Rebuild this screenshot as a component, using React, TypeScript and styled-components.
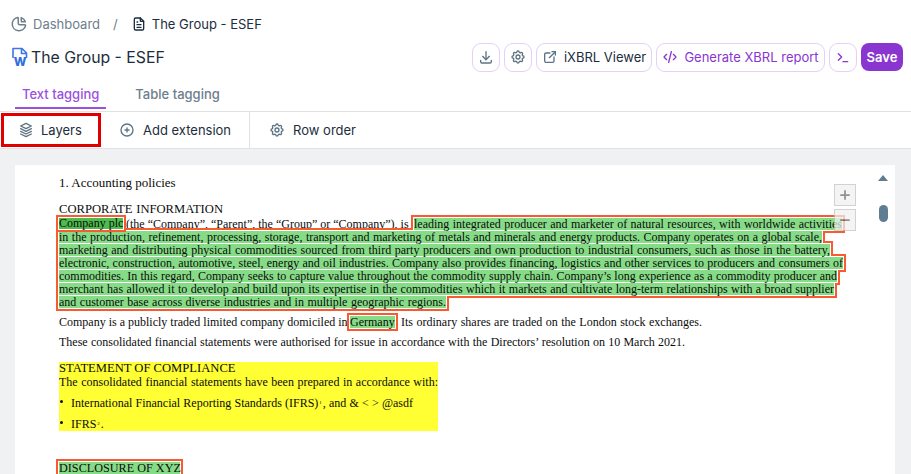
import React from 'react';
import styled, { createGlobalStyle } from 'styled-components';
import {
    TbChartPie,
    TbCirclePlus,
    TbCode,
    TbDownload,
    TbExternalLink,
    TbFileText,
    TbMinus,
    TbPlus,
    TbSettings,
    TbStack3,
    TbTerminal,
} from 'react-icons/tb';

const PURPLE = '#8a35d0';
const INK = '#1c2d3d';
const GREEN = '#86dc86';
const ORANGE = '#fa5a32';

const GlobalStyle = createGlobalStyle`
    html, body {
        margin: 0;
        background: #fff;
    }
    * {
        box-sizing: border-box;
    }
`;

const Page = styled.div`
    display: flex;
    flex-direction: column;
    width: 911px;
    height: 474px;
    overflow: hidden;
    font-family: Inter, "Liberation Sans", sans-serif;
    color: ${INK};
`;

const Breadcrumbs = styled.nav`
    display: flex;
    align-items: center;
    height: 20px;
    margin-top: 14px;
    padding-left: 10px;
    font-size: 13px;
`;

const Crumb = styled.span<{ $muted?: boolean }>`
    display: flex;
    align-items: center;
    gap: 5px;
    color: ${p => (p.$muted ? '#6d7e8c' : INK)};
`;

const Slash = styled.span`
    margin: 0 13px;
    color: #6d7e8c;
`;

const TitleRow = styled.header`
    display: flex;
    align-items: center;
    justify-content: space-between;
    height: 28px;
    margin-top: 9px;
    padding: 0 8px 0 11px;
`;

const Title = styled.h1`
    display: flex;
    align-items: center;
    gap: 2px;
    margin: 0;
    font-size: 15.8px;
    font-weight: 400;
`;

const Actions = styled.div`
    display: flex;
    gap: 4px;
`;

const ActionButton = styled.button<{ $accent?: boolean; $wide?: number }>`
    display: flex;
    align-items: center;
    justify-content: center;
    gap: 6px;
    width: ${p => p.$wide ?? 28}px;
    height: 29px;
    padding: 0;
    border: 1px solid #e4d0f8;
    border-radius: 9px;
    background: #fff;
    font: inherit;
    font-size: 13px;
    color: ${p => (p.$accent ? PURPLE : INK)};
    svg {
        color: ${p => (p.$accent ? PURPLE : '#5e7383')};
    }
`;

const SaveButton = styled.button`
    width: 42px;
    height: 28px;
    padding: 0;
    border: 0;
    border-radius: 8px;
    background: ${PURPLE};
    color: #fff;
    font: inherit;
    font-size: 13px;
    font-weight: 600;
`;

const Tabs = styled.div`
    display: flex;
    gap: 22px;
    height: 32px;
    margin-top: 9px;
    padding-left: 15px;
    border-bottom: 1px solid #dfe3e6;
`;

const Tab = styled.div<{ $active?: boolean }>`
    display: flex;
    align-items: center;
    justify-content: center;
    height: 29px;
    padding: 0 7px;
    font-size: 13px;
    font-weight: 500;
    color: ${p => (p.$active ? '#9b50e0' : '#6d7e8c')};
    border-bottom: 2px solid ${p => (p.$active ? '#9b50e0' : 'transparent')};
`;

const Toolbar = styled.div`
    display: flex;
    align-items: stretch;
    height: 37px;
    border-bottom: 1px solid #dfe3e6;
`;

const ToolItem = styled.div<{ $left: number; $right: number; $divider?: boolean }>`
    display: flex;
    align-items: center;
    gap: 8px;
    padding: 0 ${p => p.$right}px 0 ${p => p.$left}px;
    font-size: 13px;
    border-right: ${p => (p.$divider ? '1px solid #dfe3e6' : '0')};
    svg {
        color: #5e7383;
    }
`;

const MarkedItem = styled(ToolItem)`
    width: 100px;
    height: 34px;
    margin: 1px 0 0 1px;
    border: 3px solid #e00000;
    gap: 7px;
    padding: 0 0 0 14px;
`;

const Main = styled.main`
    display: flex;
    flex: 1;
    min-height: 0;
    padding: 16px 16px 0 15px;
    background: #eff1f3;
`;

const Panel = styled.section`
    position: relative;
    display: flex;
    flex: 1;
    min-width: 0;
    background: #fff;
`;

const Doc = styled.article`
    flex: 1;
    min-width: 0;
    padding: 12px 0 0 44px;
    font-family: "Liberation Serif", serif;
    color: #0c0c0c;
`;

const Row = styled.div<{ $h?: number; $top?: number }>`
    display: flex;
    align-items: flex-start;
    height: ${p => p.$h ?? 13}px;
    margin-top: ${p => p.$top ?? 0}px;
    line-height: ${p => (p.$h ?? 13) - 1}px;
`;

// a piece of text stretched to the width it has in the reference
const Text = styled.span<{ $w: number; $gap?: number; $size?: number }>`
    display: block;
    flex: none;
    width: ${p => p.$w}px;
    margin-left: ${p => p.$gap ?? 0}px;
    white-space: nowrap;
    text-align: justify;
    text-align-last: justify;
    font-size: ${p => p.$size ?? 12}px;
`;

const TagBlock = styled.div`
    isolation: isolate;
`;

// orange and white layers sit under all the green, so neighbouring rows merge in one outline
const TagSeg = styled.span<{ $w: number; $gap?: number }>`
    position: relative;
    display: block;
    flex: none;
    width: ${p => p.$w}px;
    height: 12px;
    margin-left: ${p => p.$gap ?? 0}px;
    &::before {
        content: '';
        position: absolute;
        inset: -3px;
        z-index: 1;
        background: ${ORANGE};
    }
    &::after {
        content: '';
        position: absolute;
        inset: -1px;
        z-index: 2;
        background: #fff;
    }
`;

const TagText = styled(Text)`
    position: relative;
    z-index: 3;
    height: 12px;
    background: ${GREEN};
`;

const DarkTag = styled(Text)`
    position: relative;
    z-index: 4;
    height: 11px;
    line-height: 11px;
    background: #4dbb4d;
    box-shadow: 0 0 0 1px #fff, 0 0 0 3px ${ORANGE};
`;

const Highlight = styled.div`
    width: 379px;
    margin-top: 13px;
    background: #ffff33;
`;

const BulletRow = styled(Row)`
    position: relative;
    padding-left: 12px;
    &::before {
        content: '';
        position: absolute;
        left: 1px;
        top: 3px;
        width: 3px;
        height: 3px;
        border-radius: 50%;
        background: #111;
    }
`;

const Note = styled.sup`
    font-size: 5px;
    line-height: 0;
    vertical-align: 3px;
    margin: 0 1px;
`;

const ZoomButtons = styled.div`
    position: absolute;
    top: 19px;
    left: 819px;
    z-index: 9;
    display: flex;
    flex-direction: column;
    gap: 3px;
`;

const ZoomButton = styled.div`
    display: flex;
    align-items: center;
    justify-content: center;
    width: 22px;
    height: 22px;
    border: 1.5px solid #c2c2c2;
    background: #f1f1f1;
    color: #666;
    opacity: 0.72;
`;

const ScrollColumn = styled.div`
    display: flex;
    flex-direction: column;
    align-items: center;
    flex: none;
    width: 24px;
    padding-top: 10px;
`;

const ScrollArrow = styled.div`
    width: 0;
    height: 0;
    border-left: 5px solid transparent;
    border-right: 5px solid transparent;
    border-bottom: 6px solid #5f7d92;
`;

const ScrollThumb = styled.div`
    width: 9px;
    height: 17px;
    margin-top: 24px;
    border-radius: 5px;
    background: #5f7d92;
`;

const WordIcon = () => (
    <svg width="18" height="24" viewBox="0 0 18 24" fill="none">
        <path
            d="M2 13V3.5h9l4.5 4.5v5M10.5 3.5V8.5h5"
            stroke="#3b78e7"
            strokeWidth="1.6"
            strokeLinejoin="round"
        />
        <text
            x="9"
            y="21"
            textAnchor="middle"
            fontFamily="Inter, sans-serif"
            fontSize="12"
            fontWeight="800"
            fill="#2f6fdf"
        >
            W
        </text>
    </svg>
);

const App = () => (
    <Page>
        <GlobalStyle />
        <Breadcrumbs>
            <Crumb $muted>
                <TbChartPie size={18} />
                Dashboard
            </Crumb>
            <Slash>/</Slash>
            <Crumb>
                <TbFileText size={16} />
                The Group - ESEF
            </Crumb>
        </Breadcrumbs>
        <TitleRow>
            <Title>
                <WordIcon />
                The Group - ESEF
            </Title>
            <Actions>
                <ActionButton>
                    <TbDownload size={16} />
                </ActionButton>
                <ActionButton>
                    <TbSettings size={16} />
                </ActionButton>
                <ActionButton $wide={116}>
                    <TbExternalLink size={16} />
                    iXBRL Viewer
                </ActionButton>
                <ActionButton $accent $wide={169}>
                    <TbCode size={16} />
                    Generate XBRL report
                </ActionButton>
                <ActionButton $accent>
                    <TbTerminal size={16} />
                </ActionButton>
                <SaveButton>Save</SaveButton>
            </Actions>
        </TitleRow>
        <Tabs>
            <Tab $active>Text tagging</Tab>
            <Tab>Table tagging</Tab>
        </Tabs>
        <Toolbar>
            <MarkedItem $left={14} $right={0}>
                <TbStack3 size={16} />
                Layers
            </MarkedItem>
            <ToolItem $left={18} $right={18} $divider>
                <TbCirclePlus size={16} />
                Add extension
            </ToolItem>
            <ToolItem $left={19} $right={0}>
                <TbSettings size={16} />
                Row order
            </ToolItem>
        </Toolbar>
        <Main>
            <Panel>
                <Doc>
                    <Row>
                        <Text $w={115} $size={13}>1. Accounting policies</Text>
                    </Row>
                    <Row $h={14} $top={13}>
                        <Text $w={164} $size={12.6}>CORPORATE INFORMATION</Text>
                    </Row>
                    <TagBlock>
                        <Row $top={1}>
                            <DarkTag $w={64}>Company plc</DarkTag>
                            <Text $w={285} $gap={3}>(the “Company”, “Parent”, the “Group” or “Company”), is a</Text>
                            <TagSeg $w={428} $gap={3}>
                                <TagText $w={428}>leading integrated producer and marketer of natural resources, with worldwide activities</TagText>
                            </TagSeg>
                        </Row>
                        <Row>
                            <TagSeg $w={763}>
                                <TagText $w={763}>in the production, refinement, processing, storage, transport and marketing of metals and minerals and energy products. Company operates on a global scale,</TagText>
                            </TagSeg>
                        </Row>
                        <Row>
                            <TagSeg $w={771}>
                                <TagText $w={771}>marketing and distributing physical commodities sourced from third party producers and own production to industrial consumers, such as those in the battery,</TagText>
                            </TagSeg>
                        </Row>
                        <Row>
                            <TagSeg $w={784}>
                                <TagText $w={784}>electronic, construction, automotive, steel, energy and oil industries. Company also provides financing, logistics and other services to producers and consumers of</TagText>
                            </TagSeg>
                        </Row>
                        <Row>
                            <TagSeg $w={778}>
                                <TagText $w={778}>commodities. In this regard, Company seeks to capture value throughout the commodity supply chain. Company’s long experience as a commodity producer and</TagText>
                            </TagSeg>
                        </Row>
                        <Row>
                            <TagSeg $w={775}>
                                <TagText $w={775}>merchant has allowed it to develop and build upon its expertise in the commodities which it markets and cultivate long-term relationships with a broad supplier</TagText>
                            </TagSeg>
                        </Row>
                        <Row>
                            <TagSeg $w={387}>
                                <TagText $w={387}>and customer base across diverse industries and in multiple geographic regions.</TagText>
                            </TagSeg>
                        </Row>
                        <Row $top={7}>
                            <Text $w={288}>Company is a publicly traded limited company domiciled in</Text>
                            <TagSeg $w={45} $gap={3}>
                                <TagText $w={45}>Germany</TagText>
                            </TagSeg>
                            <Text $w={301} $gap={6}>Its ordinary shares are traded on the London stock exchanges.</Text>
                        </Row>
                    </TagBlock>
                    <Row $top={7}>
                        <Text $w={626}>These consolidated financial statements were authorised for issue in accordance with the Directors’ resolution on 10 March 2021.</Text>
                    </Row>
                    <Highlight>
                        <Row $h={14}>
                            <Text $w={174} $size={12.6}>STATEMENT OF COMPLIANCE</Text>
                        </Row>
                        <Row>
                            <Text $w={379}>The consolidated financial statements have been prepared in accordance with:</Text>
                        </Row>
                        <BulletRow $top={8}>
                            <Text $w={342}>
                                International Financial Reporting Standards (IFRS)<Note>1</Note>, and &amp; &lt; &gt; @asdf
                            </Text>
                        </BulletRow>
                        <BulletRow $top={8}>
                            <Text $w={32}>IFRS<Note>2</Note>.</Text>
                        </BulletRow>
                    </Highlight>
                    <TagBlock>
                        <Row $h={14} $top={31}>
                            <TagSeg $w={121}>
                                <TagText $w={121} $size={12.2}>DISCLOSURE OF XYZ</TagText>
                            </TagSeg>
                        </Row>
                    </TagBlock>
                </Doc>
                <ZoomButtons>
                    <ZoomButton>
                        <TbPlus size={14} strokeWidth={3} />
                    </ZoomButton>
                    <ZoomButton>
                        <TbMinus size={14} strokeWidth={3} />
                    </ZoomButton>
                </ZoomButtons>
                <ScrollColumn>
                    <ScrollArrow />
                    <ScrollThumb />
                </ScrollColumn>
            </Panel>
        </Main>
    </Page>
);

export default App;
